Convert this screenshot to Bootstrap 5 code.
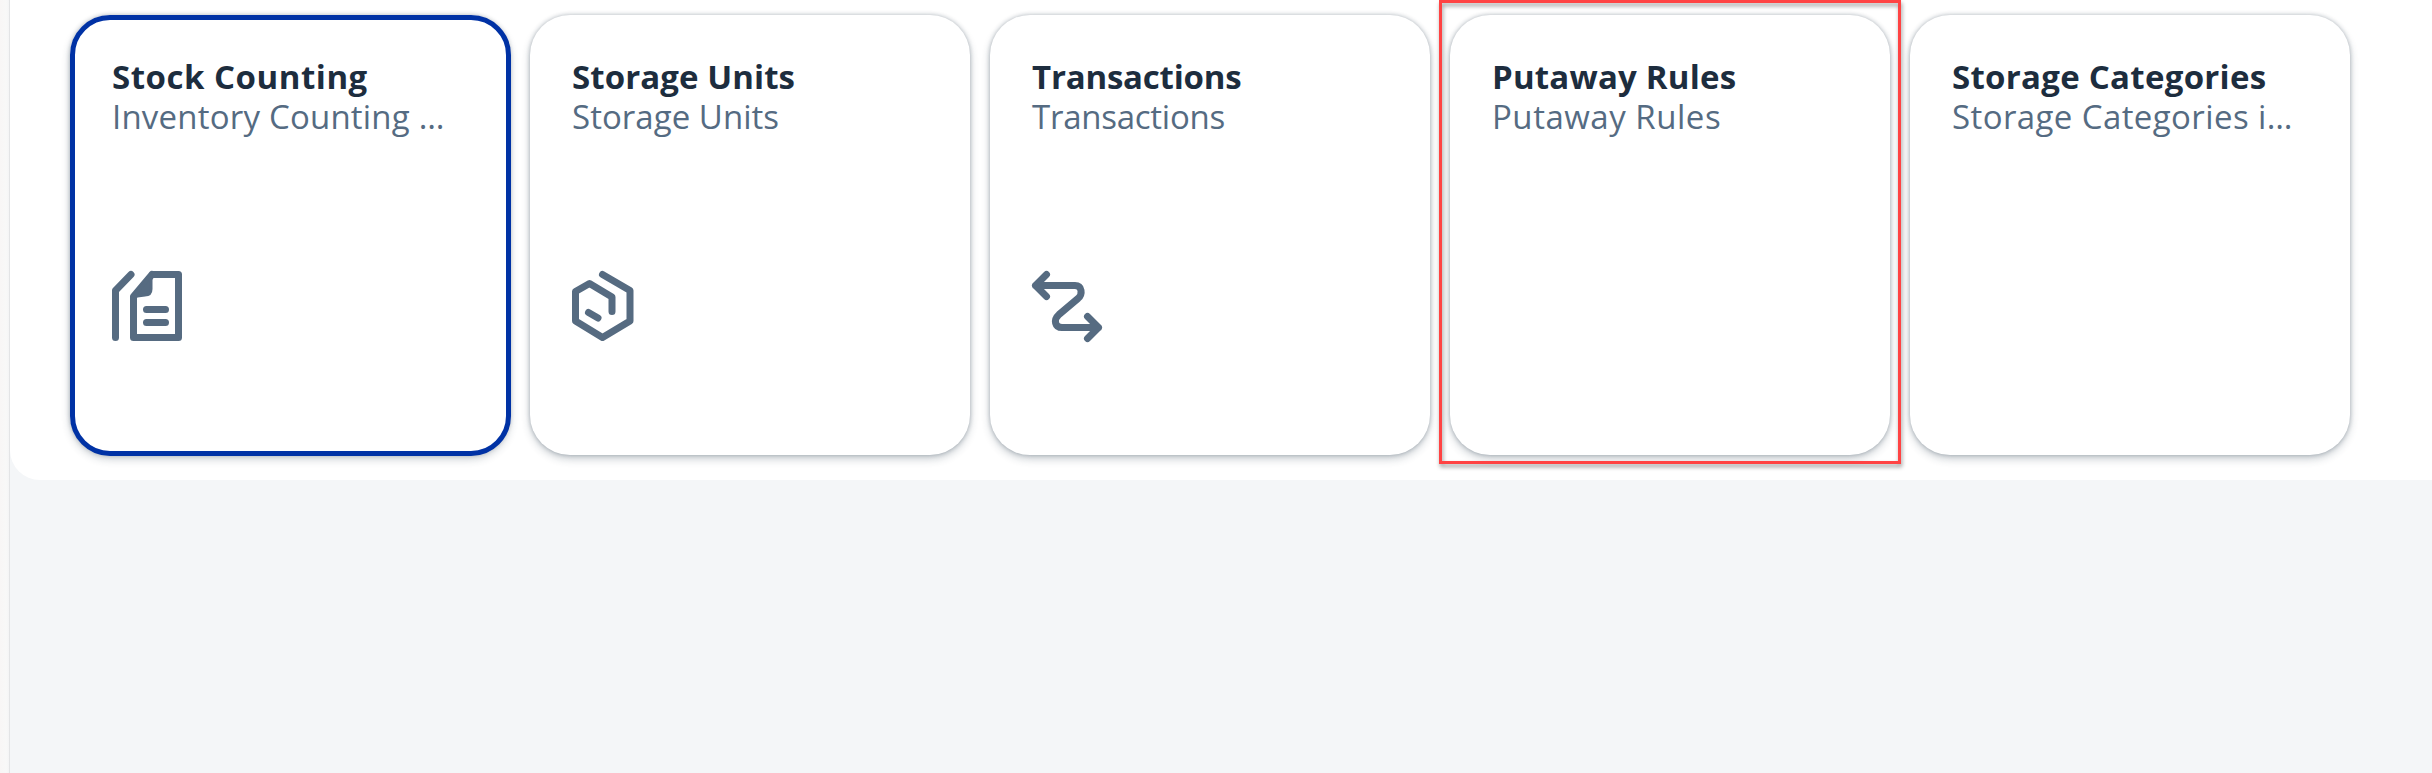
<!DOCTYPE html>
<html lang="en">
<head>
<meta charset="utf-8">
<title>Inventory</title>
<link href="https://cdn.jsdelivr.net/npm/bootstrap@5.3.0/dist/css/bootstrap.min.css" rel="stylesheet">
<script src="https://cdn.jsdelivr.net/npm/bootstrap@5.3.0/dist/js/bootstrap.bundle.min.js"></script>
<style>
body{background:#f4f6f8;font-family:"Open Sans",sans-serif;height:773px;overflow:hidden}
.side-edge{width:10px;background:linear-gradient(90deg,#f8f6f6,#f8f8f8 70%,#f4f4f5);border-right:1px solid #e3e4e6}
.panel{height:480px;padding:15px 0 0 60px;gap:20px;background:#fff;border-bottom-left-radius:30px}
.tile{width:440px;height:440px;padding:42px 42px 0;border:0;border-radius:40px;box-shadow:0 0 4px rgba(34,53,72,.32),0 4px 8px rgba(34,53,72,.24)}
.tile.active::after{content:"";position:absolute;inset:0 -1px -1px 0;border:5px solid #0032a5;border-radius:40px}
.tile h2,.tile p{font-size:33px;line-height:40px;margin:0;white-space:nowrap}
.tile h2{font-weight:700;color:#1d2d3e}
.tile p{font-weight:450;color:#556b82}
.tile svg{width:70px;height:70px;margin-top:134px;fill:none;stroke:#566b81;stroke-width:7;stroke-linecap:round;stroke-linejoin:round;overflow:visible}
.stock h2{letter-spacing:.52px}
.stock p{letter-spacing:.2px}
.units h2{letter-spacing:.08px}
.units p{letter-spacing:.03px}
.moves h2{letter-spacing:-.2px}
.moves p{letter-spacing:-.25px}
.rules h2{letter-spacing:.2px}
.rules p{letter-spacing:.52px}
.groups h2{letter-spacing:.28px}
.groups p{letter-spacing:.4px}
.frame{position:absolute;inset:-15px -11px -9px;border:3px solid #ff4343;filter:drop-shadow(1px 3px 2px rgba(0,0,0,.4))}
</style>
</head>
<body class="d-flex">
<aside class="side-edge flex-shrink-0"></aside>
<main class="flex-grow-1">
<section class="panel d-flex">
<article class="card tile stock active"><h2>Stock Counting</h2><p>Inventory Counting …</p>
<svg viewBox="0 0 70 70"><path d="M19 3.500 3.500 19.500V66.500M40 3.500H66.500V66.500H21.500V25.500L40 3.500M34.500 38.500H53.500M34.500 51.500H53.500"/><path d="M21.500 25.500 39 5V18Q39 24 33 24Z" fill="#566b81" stroke-width="3"/></svg></article>
<article class="card tile units"><h2>Storage Units</h2><p>Storage Units</p>
<svg viewBox="0 0 70 70"><path d="M30.500 3.500 58 19.500V50L30.500 66.500 3.500 50V20.500L17.500 12.500 40 26V40.500M16.500 41.500 26 47"/></svg></article>
<article class="card tile moves"><h2>Transactions</h2><p>Transactions</p>
<svg viewBox="0 0 70 70"><path d="M14.500 3.500 3.500 14.500 14.500 25.500M3.500 14.500H43C50 14.500 51 23 46 27.500L27 43.500C21 49 23 56.500 30 56.500H66.500M55.500 45.500 66.500 56.500 55.500 67.500"/></svg></article>
<article class="card tile rules"><h2>Putaway Rules</h2><p>Putaway Rules</p><div class="frame"></div></article>
<article class="card tile groups"><h2>Storage Categories</h2><p>Storage Categories i…</p></article>
</section>
</main>
</body>
</html>
